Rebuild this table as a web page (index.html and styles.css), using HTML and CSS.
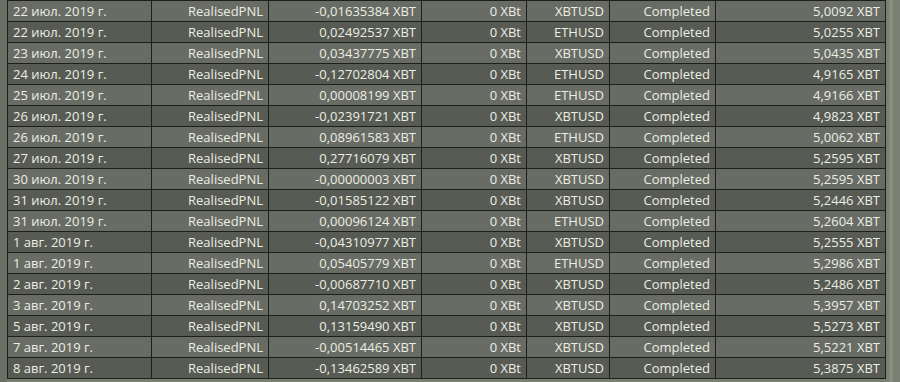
FILE: index.html
```html
<!DOCTYPE html>
<html lang="ru">
<head>
<meta charset="utf-8">
<title>Wallet history</title>
<link rel="stylesheet" href="styles.css">
</head>
<body>
<div class="page">
  <table class="history">
    <colgroup>
      <col class="c-date"><col class="c-type"><col class="c-amount"><col class="c-fee"><col class="c-addr"><col class="c-status"><col class="c-bal">
    </colgroup>
    <tbody>
      <tr><td class="l">22 июл. 2019 г.</td><td>RealisedPNL</td><td>-0,01635384 XBT</td><td>0 XBt</td><td>XBTUSD</td><td>Completed</td><td>5,0092 XBT</td></tr>
      <tr><td class="l">22 июл. 2019 г.</td><td>RealisedPNL</td><td>0,02492537 XBT</td><td>0 XBt</td><td>ETHUSD</td><td>Completed</td><td>5,0255 XBT</td></tr>
      <tr><td class="l">23 июл. 2019 г.</td><td>RealisedPNL</td><td>0,03437775 XBT</td><td>0 XBt</td><td>XBTUSD</td><td>Completed</td><td>5,0435 XBT</td></tr>
      <tr><td class="l">24 июл. 2019 г.</td><td>RealisedPNL</td><td>-0,12702804 XBT</td><td>0 XBt</td><td>ETHUSD</td><td>Completed</td><td>4,9165 XBT</td></tr>
      <tr><td class="l">25 июл. 2019 г.</td><td>RealisedPNL</td><td>0,00008199 XBT</td><td>0 XBt</td><td>ETHUSD</td><td>Completed</td><td>4,9166 XBT</td></tr>
      <tr><td class="l">26 июл. 2019 г.</td><td>RealisedPNL</td><td>-0,02391721 XBT</td><td>0 XBt</td><td>XBTUSD</td><td>Completed</td><td>4,9823 XBT</td></tr>
      <tr><td class="l">26 июл. 2019 г.</td><td>RealisedPNL</td><td>0,08961583 XBT</td><td>0 XBt</td><td>ETHUSD</td><td>Completed</td><td>5,0062 XBT</td></tr>
      <tr><td class="l">27 июл. 2019 г.</td><td>RealisedPNL</td><td>0,27716079 XBT</td><td>0 XBt</td><td>XBTUSD</td><td>Completed</td><td>5,2595 XBT</td></tr>
      <tr><td class="l">30 июл. 2019 г.</td><td>RealisedPNL</td><td>-0,00000003 XBT</td><td>0 XBt</td><td>XBTUSD</td><td>Completed</td><td>5,2595 XBT</td></tr>
      <tr><td class="l">31 июл. 2019 г.</td><td>RealisedPNL</td><td>-0,01585122 XBT</td><td>0 XBt</td><td>XBTUSD</td><td>Completed</td><td>5,2446 XBT</td></tr>
      <tr><td class="l">31 июл. 2019 г.</td><td>RealisedPNL</td><td>0,00096124 XBT</td><td>0 XBt</td><td>ETHUSD</td><td>Completed</td><td>5,2604 XBT</td></tr>
      <tr><td class="l">1 авг. 2019 г.</td><td>RealisedPNL</td><td>-0,04310977 XBT</td><td>0 XBt</td><td>XBTUSD</td><td>Completed</td><td>5,2555 XBT</td></tr>
      <tr><td class="l">1 авг. 2019 г.</td><td>RealisedPNL</td><td>0,05405779 XBT</td><td>0 XBt</td><td>ETHUSD</td><td>Completed</td><td>5,2986 XBT</td></tr>
      <tr><td class="l">2 авг. 2019 г.</td><td>RealisedPNL</td><td>-0,00687710 XBT</td><td>0 XBt</td><td>XBTUSD</td><td>Completed</td><td>5,2486 XBT</td></tr>
      <tr><td class="l">3 авг. 2019 г.</td><td>RealisedPNL</td><td>0,14703252 XBT</td><td>0 XBt</td><td>XBTUSD</td><td>Completed</td><td>5,3957 XBT</td></tr>
      <tr><td class="l">5 авг. 2019 г.</td><td>RealisedPNL</td><td>0,13159490 XBT</td><td>0 XBt</td><td>XBTUSD</td><td>Completed</td><td>5,5273 XBT</td></tr>
      <tr><td class="l">7 авг. 2019 г.</td><td>RealisedPNL</td><td>-0,00514465 XBT</td><td>0 XBt</td><td>XBTUSD</td><td>Completed</td><td>5,5221 XBT</td></tr>
      <tr><td class="l">8 авг. 2019 г.</td><td>RealisedPNL</td><td>-0,13462589 XBT</td><td>0 XBt</td><td>XBTUSD</td><td>Completed</td><td>5,3875 XBT</td></tr>
    </tbody>
  </table>
  <div class="track"></div>
</div>
</body>
</html>
```
FILE: styles.css
```css
html, body {
  margin: 0;
  padding: 0;
  height: 100%;
  background: #767b6e;
  overflow: hidden;
}
.page {
  display: flex;
  align-items: flex-start;
  height: 382px;
  padding-left: 7px;
  background: linear-gradient(to right, #6b7066 0, #6b7066 7px, #7a7f72 7px);
}
.history {
  border-collapse: collapse;
  table-layout: fixed;
  width: 878px;
  font-family: "Open Sans", sans-serif;
  font-size: 13px;
  color: #eceee4;
  flex: none;
}
.c-date { width: 144px; }
.c-type { width: 117px; }
.c-amount { width: 153px; }
.c-fee { width: 105px; }
.c-addr { width: 83px; }
.c-status { width: 106px; }
.c-bal { width: 170px; }
.history td {
  border: 1px solid #1d1f1b;
  height: 20px;
  padding: 0 5px 0 5px;
  line-height: 20px;
  text-align: right;
  white-space: nowrap;
  overflow: hidden;
}
.history td.l {
  text-align: left;
  padding-left: 5px;
}
.history tr:nth-child(odd) td { background: #686c64; }
.history tr:nth-child(even) td { background: #575b53; }
.track {
  width: 4px;
  height: 382px;
  margin-left: 3px;
  background: #8a8e80;
  flex: none;
}
```
